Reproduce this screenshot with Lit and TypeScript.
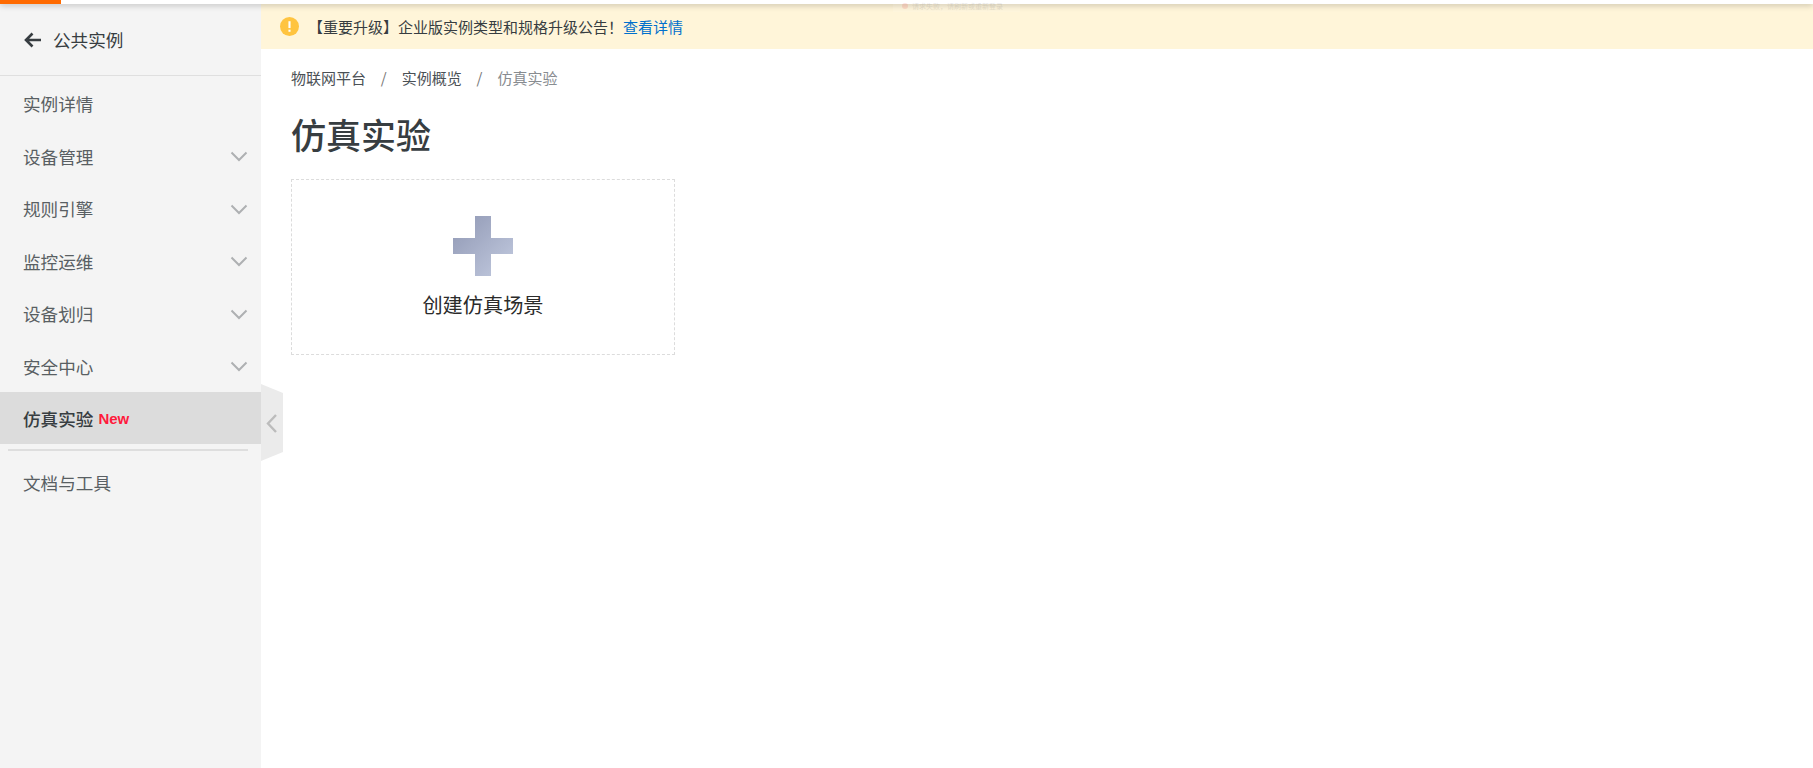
import { LitElement, html, css, svg } from "lit";
import { customElement } from "lit/decorators.js";

const MENU: { label: string; arrow?: boolean; active?: boolean }[] = [
  { label: "实例详情" },
  { label: "设备管理", arrow: true },
  { label: "规则引擎", arrow: true },
  { label: "监控运维", arrow: true },
  { label: "设备划归", arrow: true },
  { label: "安全中心", arrow: true },
  { label: "仿真实验", active: true },
];

@customElement("app-root")
export class AppRoot extends LitElement {
  static styles = css`
    :host {
      display: block;
      width: 100%;
      height: 768px;
      overflow: hidden;
      font-family: "Noto Sans CJK SC", "Liberation Sans", sans-serif;
      color: #373d41;
      background: #fff;
    }
    .topbar {
      position: relative;
      z-index: 3;
      height: 4px;
      background: #fff;
      box-shadow: 0 1px 6px rgba(0, 0, 0, 0.28);
    }
    .progress {
      width: 61px;
      height: 4px;
      background: #ff6a00;
    }
    .toast {
      position: absolute;
      left: 893px;
      top: 0;
      z-index: 4;
      display: flex;
      align-items: center;
      gap: 4px;
      box-sizing: border-box;
      width: 127px;
      height: 12px;
      padding-left: 9px;
      font-size: 7px;
      line-height: 10px;
      color: #555;
      background: rgba(255, 255, 255, 0.1);
      white-space: nowrap;
    }
    .toast > * {
      opacity: 0.14;
    }
    .toast i {
      flex: none;
      width: 6px;
      height: 6px;
      border-radius: 50%;
      background: #e33;
    }
    .body {
      display: flex;
      height: 764px;
    }
    .side {
      position: relative;
      flex: 0 0 261px;
      background: #f4f4f4;
      font-size: 17.6px;
    }
    .back {
      display: flex;
      align-items: center;
      gap: 11px;
      height: 72px;
      padding: 0 0 0 24px;
      border-bottom: 1px solid #dfdfdf;
      box-sizing: border-box;
      color: #373d41;
    }
    .back svg {
      display: block;
    }
    .menu {
      padding-top: 1px;
    }
    .item {
      display: flex;
      align-items: center;
      height: 52.5px;
      padding: 1px 13px 0 23px;
      color: #595f63;
      box-sizing: border-box;
    }
    .item.active {
      height: 52px;
      background: #dcdcdc;
      color: #373d41;
      font-weight: 500;
    }
    .item .label {
      flex: 1;
    }
    .new {
      margin-left: 5px;
      color: #ff1a3c;
      font: bold 15px "Liberation Sans", sans-serif;
    }
    .rule {
      height: 2px;
      margin: 5px 13px 0 8px;
      background: #dedede;
    }
    .docs {
      margin-top: 5px;
    }
    .handle {
      position: absolute;
      left: 261px;
      top: 380px;
      display: block;
    }
    .main {
      flex: 1;
      min-width: 0;
    }
    .banner {
      display: flex;
      align-items: center;
      height: 45px;
      padding-left: 19px;
      background: #fff5d9;
      font-size: 15px;
      color: #373d41;
    }
    .banner svg {
      flex: none;
      margin-right: 9px;
    }
    .banner a {
      margin-left: 0;
      color: #0070cc;
    }
    .content {
      padding: 0 30px;
    }
    .crumbs {
      display: flex;
      align-items: center;
      height: 22px;
      margin-top: 17px;
      font-size: 15px;
      color: #4a5055;
    }
    .crumbs .sep {
      margin: 0 15px 0 14.8px;
      color: #777;
    }
    .crumbs .cur {
      color: #888c90;
    }
    h1 {
      margin: 20px 0 0;
      font-size: 35px;
      line-height: 52px;
      font-weight: 500;
      color: #373d41;
    }
    .card {
      display: flex;
      flex-direction: column;
      align-items: center;
      box-sizing: border-box;
      width: 384px;
      height: 176px;
      margin-top: 19px;
      padding-top: 36px;
      border: 1px dashed #dcdcdc;
    }
    .card svg {
      display: block;
    }
    .card span {
      margin-top: 14px;
      font-size: 20.2px;
      line-height: 30px;
      color: #2b2b2b;
    }
  `;

  private chevron() {
    return html`<svg width="18" height="18" viewBox="0 0 18 18" fill="none">
      <path d="M1.5 5.5 L9 13 L16.5 5.5" stroke="#aeb0b2" stroke-width="2" />
    </svg>`;
  }

  render() {
    return html`
      <div class="topbar"><div class="progress"></div></div>
      <div class="toast"><i></i><span>请求失败，请刷新或重新登录</span></div>
      <div class="body">
        <aside class="side">
          <div class="back">
            <svg width="18" height="16" viewBox="0 0 18 16" fill="none">
              <path d="M17 8 H2.5 M8.5 1.5 L2 8 L8.5 14.5" stroke="#373d41" stroke-width="2.6" />
            </svg>
            <span>公共实例</span>
          </div>
          <nav class="menu">
            ${MENU.map(
              (m) => html`<div class="item ${m.active ? "active" : ""}">
                ${m.active
                  ? html`<span>${m.label}</span><span class="new">New</span>`
                  : html`<span class="label">${m.label}</span>`}
                ${m.arrow ? this.chevron() : ""}
              </div>`
            )}
            <div class="rule"></div>
            <div class="item docs"><span class="label">文档与工具</span></div>
          </nav>
          <svg class="handle" width="22" height="77" viewBox="0 0 22 77">
            ${svg`<polygon points="0,0 22,9 22,68 0,77" fill="#ebebeb" />
            <path d="M15 31 L7 39.5 L15 48" fill="none" stroke="#bcbcbc" stroke-width="2.4" />`}
          </svg>
        </aside>
        <main class="main">
          <div class="banner">
            <svg width="19" height="19" viewBox="0 0 18 18">
              <circle cx="9" cy="9" r="9" fill="#ffc440" />
              <rect x="8" y="4" width="2" height="6.5" fill="#fff" />
              <rect x="8" y="12" width="2" height="2" fill="#fff" />
            </svg>
            <span>【重要升级】企业版实例类型和规格升级公告！</span><a>查看详情</a>
          </div>
          <div class="content">
            <div class="crumbs">
              <span>物联网平台</span><span class="sep">/</span><span>实例概览</span><span class="sep">/</span><span class="cur">仿真实验</span>
            </div>
            <h1>仿真实验</h1>
            <div class="card">
              <svg width="60" height="60" viewBox="0 0 60 60">
                <defs>
                  <linearGradient id="g" x1="0" y1="0" x2="1" y2="1">
                    <stop offset="0" stop-color="#8f97b3" />
                    <stop offset="1" stop-color="#c3cbe0" />
                  </linearGradient>
                </defs>
                <path d="M22 0 H38 V22 H60 V38 H38 V60 H22 V38 H0 V22 H22 Z" fill="url(#g)" />
              </svg>
              <span>创建仿真场景</span>
            </div>
          </div>
        </main>
      </div>
    `;
  }
}
